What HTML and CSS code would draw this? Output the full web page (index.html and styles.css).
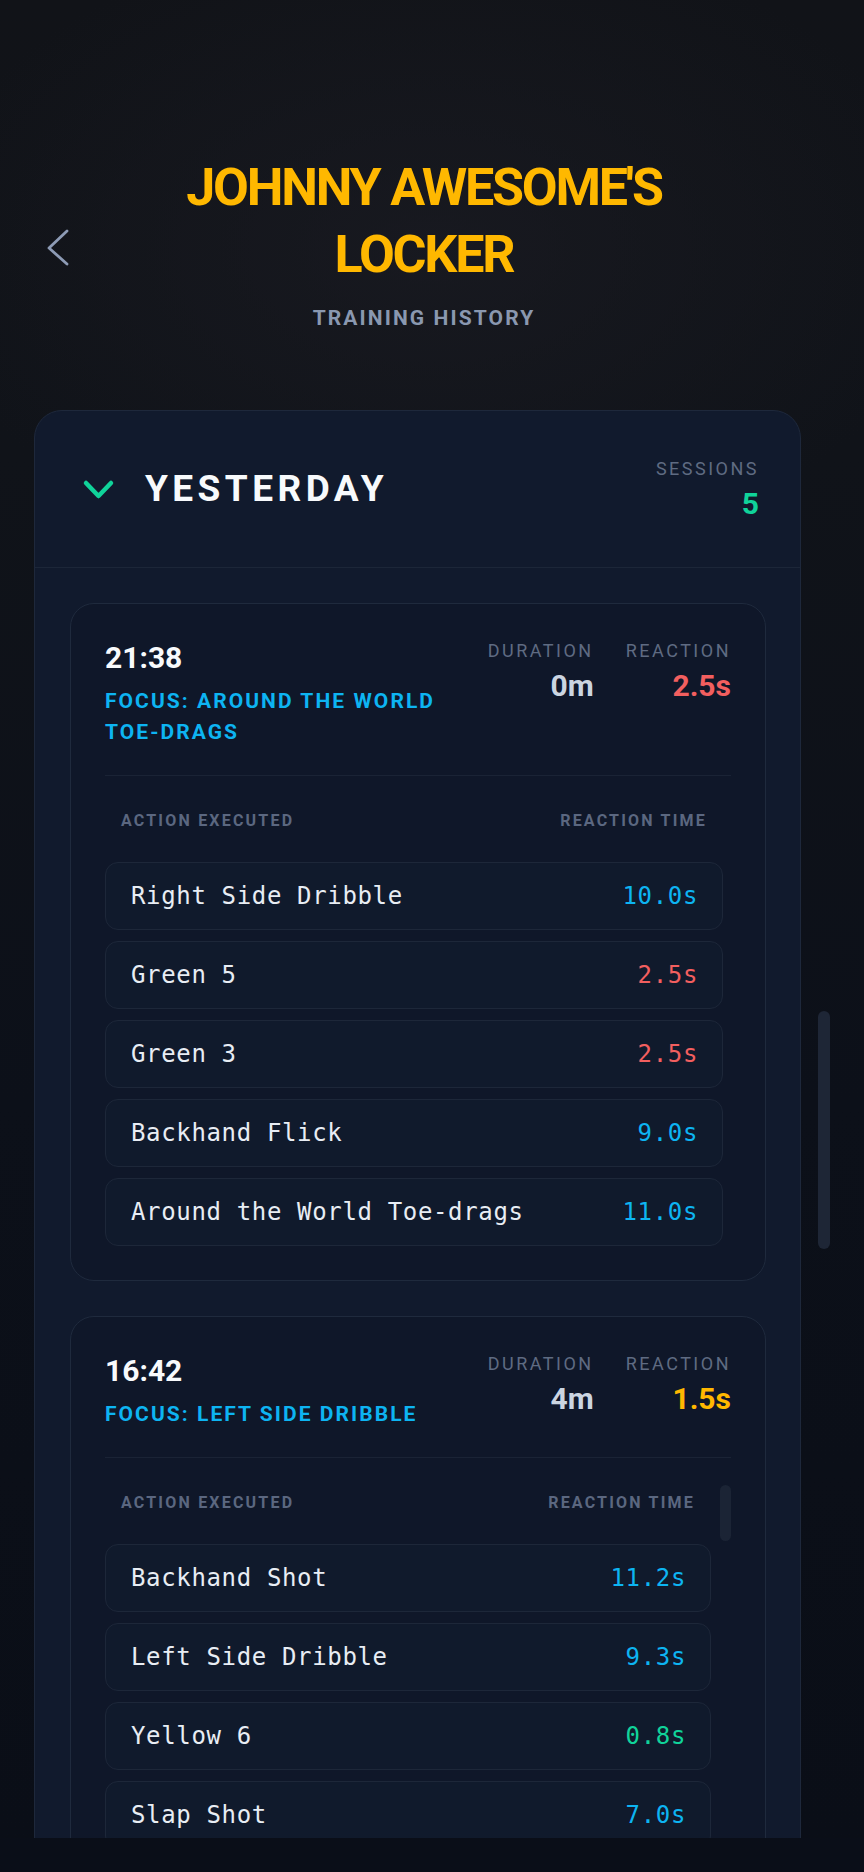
FILE: index.html
```html
<!DOCTYPE html>
<html lang="en">
<head>
<meta charset="utf-8">
<title>Johnny Awesome's Locker</title>
<link rel="stylesheet" href="styles.css">
</head>
<body>
<div class="app">
  <div class="viewport">
    <main class="content">
      <header class="hero">
        <button class="back" aria-label="Back">
          <svg width="22" height="38" viewBox="0 0 22 38"><path d="M20 3 L2 20 L20 36" fill="none" stroke="#8d9bb5" stroke-width="2.8" stroke-linecap="round" stroke-linejoin="round"/></svg>
        </button>
        <div class="hero-text">
          <h1 class="title">JOHNNY AWESOME'S LOCKER</h1>
          <p class="subtitle">TRAINING HISTORY</p>
        </div>
      </header>

      <section class="day-card">
        <div class="day-head">
          <div class="day-title">
            <svg width="33" height="21" viewBox="0 0 33 21"><path d="M4 4 L16.5 17 L29 4" fill="none" stroke="#10d39a" stroke-width="4.5" stroke-linecap="round" stroke-linejoin="round"/></svg>
            <h2>YESTERDAY</h2>
          </div>
          <div class="stat">
            <span class="stat-label">SESSIONS</span>
            <span class="stat-value green">5</span>
          </div>
        </div>

        <div class="day-body">
          <article class="session">
            <div class="session-top">
              <div class="session-info">
                <div class="session-time">21:38</div>
                <div class="session-focus">FOCUS: AROUND THE WORLD TOE-DRAGS</div>
              </div>
              <div class="session-stats">
                <div class="stat">
                  <span class="stat-label">DURATION</span>
                  <span class="stat-value muted">0m</span>
                </div>
                <div class="stat">
                  <span class="stat-label">REACTION</span>
                  <span class="stat-value red">2.5s</span>
                </div>
              </div>
            </div>
            <div class="actions">
              <div class="actions-head"><span>ACTION EXECUTED</span><span>REACTION TIME</span></div>
              <ul class="action-list">
                <li class="action"><span>Right Side Dribble</span><span class="blue">10.0s</span></li>
                <li class="action"><span>Green 5</span><span class="red">2.5s</span></li>
                <li class="action"><span>Green 3</span><span class="red">2.5s</span></li>
                <li class="action"><span>Backhand Flick</span><span class="blue">9.0s</span></li>
                <li class="action"><span>Around the World Toe-drags</span><span class="blue">11.0s</span></li>
              </ul>
            </div>
          </article>

          <article class="session">
            <div class="session-top">
              <div class="session-info">
                <div class="session-time">16:42</div>
                <div class="session-focus">FOCUS: LEFT SIDE DRIBBLE</div>
              </div>
              <div class="session-stats">
                <div class="stat">
                  <span class="stat-label">DURATION</span>
                  <span class="stat-value muted">4m</span>
                </div>
                <div class="stat">
                  <span class="stat-label">REACTION</span>
                  <span class="stat-value amber">1.5s</span>
                </div>
              </div>
            </div>
            <div class="actions scroll">
              <div class="list-thumb"></div>
              <div class="actions-head"><span>ACTION EXECUTED</span><span>REACTION TIME</span></div>
              <ul class="action-list">
                <li class="action"><span>Backhand Shot</span><span class="blue">11.2s</span></li>
                <li class="action"><span>Left Side Dribble</span><span class="blue">9.3s</span></li>
                <li class="action"><span>Yellow 6</span><span class="green">0.8s</span></li>
                <li class="action"><span>Slap Shot</span><span class="blue">7.0s</span></li>
              </ul>
            </div>
          </article>
        </div>
      </section>
    </main>
    <div class="page-thumb"></div>
  </div>
  <div class="bottom-bar"></div>
</div>
</body>
</html>
```

FILE: styles.css
```css
* { box-sizing: border-box; }

body {
  margin: 0;
  background: #0a0e18;
  font-family: Roboto, "Liberation Sans", sans-serif;
}

.app {
  width: 864px;
  height: 1872px;
  display: flex;
  flex-direction: column;
}

.viewport {
  position: relative;
  flex: none;
  height: 1838px;
  overflow: hidden;
  background:
    radial-gradient(ellipse 520px 320px at 50% 250px, rgba(25, 26, 33, 0.85), rgba(25, 26, 33, 0) 100%),
    linear-gradient(180deg, #111318 0%, #101319 25%, #0c1019 60%, #0a0e17 100%);
}

.bottom-bar {
  flex: 1;
  background: #0a0e18;
}

.content {
  width: 848px;
  padding-top: 154px;
}

/* Hero */
.hero {
  display: grid;
  grid-template-columns: 1fr 560px 1fr;
  align-items: center;
}

.back {
  justify-self: start;
  margin: 10px 0 0 47px;
  padding: 0;
  border: 0;
  background: none;
  display: flex;
}

.hero-text {
  text-align: center;
}

.title {
  margin: 0;
  font-size: 52px;
  line-height: 67px;
  font-weight: 700;
  letter-spacing: -2.2px;
  color: #ffb800;
}

.subtitle {
  margin: 18px 0 0;
  font-size: 21px;
  line-height: 24px;
  font-weight: 700;
  letter-spacing: 2.1px;
  color: #8a98b0;
}

/* Day card */
.day-card {
  margin: 80px 0 0 34px;
  width: 767px;
  background: #111a2d;
  border: 1px solid #1e283b;
  border-radius: 28px;
}

.day-head {
  height: 157px;
  display: flex;
  align-items: center;
  justify-content: space-between;
  padding: 0 41px 0 47px;
  border-bottom: 1px solid #1c2638;
}

.day-title {
  display: flex;
  align-items: center;
  gap: 30px;
}

.day-title svg { display: block; }

.day-title h2 {
  margin: 0;
  font-size: 37px;
  line-height: 40px;
  font-weight: 700;
  letter-spacing: 4.45px;
  color: #f8fafc;
}

.stat {
  display: flex;
  flex-direction: column;
  align-items: flex-end;
}

.stat-label {
  font-size: 18px;
  line-height: 22px;
  font-weight: 400;
  letter-spacing: 2.5px;
  color: #5f6b82;
}

.stat-value {
  margin-top: 7px;
  font-size: 30px;
  line-height: 33px;
  font-weight: 700;
}

.day-body {
  padding: 35px 34px 0 35px;
}

/* Session card */
.session {
  background: #0f1729;
  border: 1px solid #1f2a3d;
  border-radius: 24px;
  padding: 36px 34px 34px;
}

.session + .session {
  margin-top: 35px;
}

.session-top {
  display: flex;
  justify-content: space-between;
  align-items: flex-start;
  gap: 32px;
  padding-bottom: 27px;
  border-bottom: 1px solid #1a2335;
}

.session-info {
  flex: 1;
  min-width: 0;
}

.session-time {
  font-size: 30px;
  line-height: 36px;
  font-weight: 700;
  color: #f8fafc;
}

.session-focus {
  margin-top: 10px;
  font-size: 21px;
  line-height: 31px;
  font-weight: 700;
  letter-spacing: 2.05px;
  color: #0db4f2;
}

.session-stats {
  display: flex;
  gap: 32px;
}

/* Actions table */
.actions {
  margin-top: 27px;
  padding-right: 8px;
}

.actions.scroll {
  position: relative;
  padding-right: 20px;
}

.list-thumb {
  position: absolute;
  right: 0;
  top: 0;
  width: 11px;
  height: 56px;
  border-radius: 6px;
  background: #1b2435;
}

.actions-head {
  display: flex;
  justify-content: space-between;
  padding: 8px 16px 0;
  margin-bottom: 31px;
  font-size: 16px;
  line-height: 20px;
  font-weight: 700;
  letter-spacing: 2.2px;
  color: #5b6780;
}

.action-list {
  list-style: none;
  margin: 0;
  padding: 0;
  display: flex;
  flex-direction: column;
  gap: 11px;
}

.action {
  height: 68px;
  display: flex;
  align-items: center;
  justify-content: space-between;
  padding: 0 24px 0 25px;
  background: #101a2c;
  border: 1px solid #1d2739;
  border-radius: 13px;
  font-family: "DejaVu Sans Mono", "Liberation Mono", monospace;
  font-size: 24px;
  letter-spacing: 0.65px;
  color: #e8edf4;
}

/* Colours */
.green { color: #10d39a; }
.red { color: #f25f5f; }
.blue { color: #0db4f2; }
.amber { color: #ffb800; }
.muted { color: #cbd5e1; }

.page-thumb {
  position: absolute;
  left: 818px;
  top: 1011px;
  width: 12px;
  height: 238px;
  border-radius: 6px;
  background: #1e2636;
}
```
